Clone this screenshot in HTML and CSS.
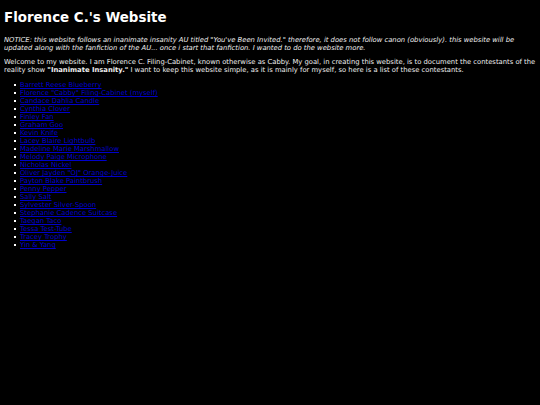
FILE: index.html
```html
<!DOCTYPE html>
<html lang="en">
<head>
    <meta charset="UTF-8">
    <meta name="viewport" content="width=device-width, initial-scale=1.0">
    <title>Florence C.'s Website</title>
    <link rel="stylesheet" href="styles.css">
</head>
<body>
    <h1 class="title">Florence C.'s Website</h1>
    <p class="notice">NOTICE: this website follows an inanimate insanity AU titled "You've Been Invited." therefore, it does not follow canon (obviously). this website will be updated along with the fanfiction of the AU... once i start that fanfiction. I wanted to do the website more.</p>
    <p class="intro">Welcome to my website. I am Florence C. Filing-Cabinet, known otherwise as Cabby. My goal, in creating this website, is to document the contestants of the reality show <b>"Inanimate Insanity."</b> I want to keep this website simple, as it is mainly for myself, so here is a list of these contestants.</p>
    <ul class="contestants">
        <li><a href="#">Barrett Reese Blueberry</a></li>
        <li><a href="#">Florence "Cabby" Filing-Cabinet (myself)</a></li>
        <li><a href="#">Candace Dahlia Candle</a></li>
        <li><a href="#">Cynthia Clover</a></li>
        <li><a href="#">Finley Fan</a></li>
        <li><a href="#">Graham Goo</a></li>
        <li><a href="#">Kevin Knife</a></li>
        <li><a href="#">Lacey Blaire Lightbulb</a></li>
        <li><a href="#">Madeline Marie Marshmallow</a></li>
        <li><a href="#">Melody Paige Microphone</a></li>
        <li><a href="#">Nicholas Nickel</a></li>
        <li><a href="#">Oliver Jayden "OJ" Orange-Juice</a></li>
        <li><a href="#">Payton Blake Paintbrush</a></li>
        <li><a href="#">Penny Pepper</a></li>
        <li><a href="#">Sally Salt</a></li>
        <li><a href="#">Sylvester Silver-Spoon</a></li>
        <li><a href="#">Stephanie Cadence Suitcase</a></li>
        <li><a href="#">Taegan Taco</a></li>
        <li><a href="#">Tessa Test-Tube</a></li>
        <li><a href="#">Tracey Trophy</a></li>
        <li><a href="#">Yin &amp; Yang</a></li>
    </ul>
</body>
</html>
```

FILE: styles.css
```css
body {
    margin: 4px 2px 4px 4px;
    background-color: #000;
    color: #eee;
    font-family: "DejaVu Sans", Verdana, sans-serif;
    font-size: 6.8px;
    line-height: 8px;
}
.title {
    margin: 6px 0 11px;
    font-size: 13.4px;
    line-height: 15px;
    font-weight: bold;
    color: #fff;
}
.notice {
    margin: 0 0 6px;
    font-style: italic;
}
.intro {
    margin: 0 0 7px;
}
.contestants {
    margin: 0;
    padding-left: 10px;
    list-style: none;
}
.contestants li {
    display: flex;
    align-items: center;
    gap: 4px;
}
.contestants li::before {
    content: "";
    width: 2px;
    height: 2px;
    background-color: #fff;
}
a {
    color: #0000cc;
}
```
